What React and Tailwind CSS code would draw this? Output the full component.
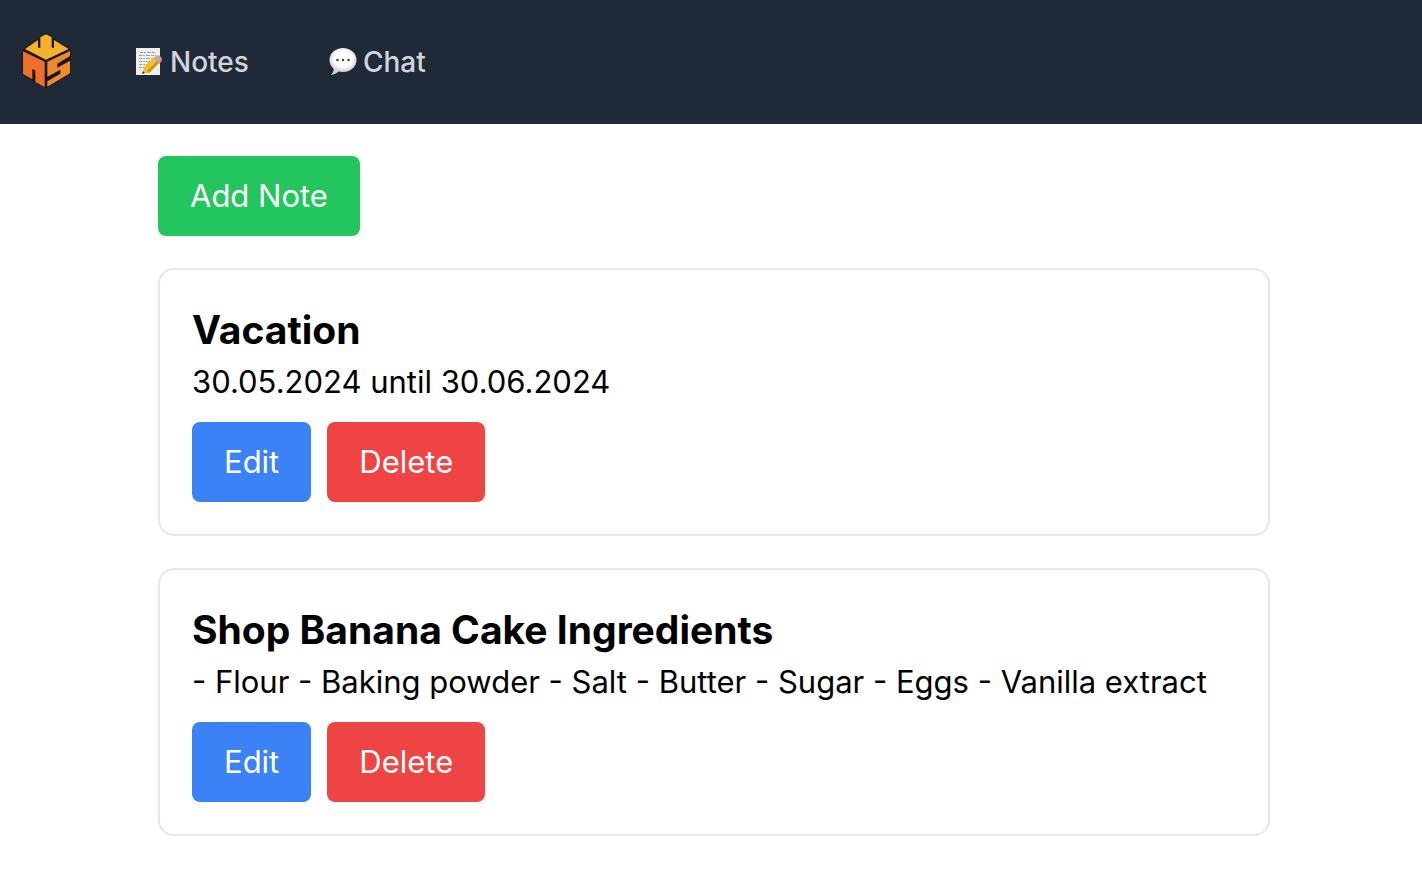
import { useState } from 'react';

const Logo = () => (
    <svg viewBox="48 36 180 180" className="w-15 h-15" aria-hidden="true">
        <circle cx="138" cy="124" r="86" fill="#1b2d42" opacity="0.45" />
        <path d="M138 40 L212 88 V162 L138 205 L66 164 V90 Z" fill="#1c1710" />
        {/* top */}
        <path d="M138 43 L155 52 V83 H162 V60 L206 87 L138 119 L75 87 L114 60 V83 H121 V52 Z" fill="#f3b229" />
        {/* left side */}
        <path d="M69 94 L134 125 V201 L106 186 V152 L97 147 V178 L69 162 Z" fill="#ee6f2b" />
        {/* right side */}
        <path d="M142 125 L210 93 V108 L172 131 V143 L210 122 V160 L142 200 V184 L181 161 V149 L142 170 Z" fill="#ee8a30" />
    </svg>
);

const NoteIcon = () => (
    <svg viewBox="0 0 28 32" className="w-7 h-8" aria-hidden="true">
        <rect x="0" y="2" width="24" height="27" fill="#eeeeec" />
        <g stroke="#9a9da1" strokeWidth="1" strokeDasharray="3 1 2 1 4 1">
            <path d="M4 6.5 H19" />
            <path d="M3 9.5 H20" />
            <path d="M3 12.5 H17" />
            <path d="M3 15.5 H14" />
            <path d="M3 18.5 H11" />
            <path d="M3 21.5 H8" />
        </g>
        <path d="M6 28 L8 21 L13 26 Z" fill="#e9c69a" />
        <path d="M6 28 L7 25 L9 27 Z" fill="#333333" />
        <path d="M8 21 L18 11 L23 17 L13 27 Q7 28 8 21 Z" fill="#f2c11d" />
        <path d="M11 25 L21 15 L23 17 L13 27 Z" fill="#cf9412" />
        <path d="M18 12 L20 10 L25 16 L23 18 Z" fill="#a9adb2" />
        <path d="M20 10 Q23 8 25 11 Q27 14 25 16 Z" fill="#e98c8c" />
    </svg>
);

const ChatIcon = () => (
    <svg viewBox="0 0 28 32" className="w-7 h-8" aria-hidden="true">
        <defs>
            <radialGradient id="bubble" cx="0.5" cy="0.45" r="0.55">
                <stop offset="0.6" stopColor="#ffffff" />
                <stop offset="1" stopColor="#cfcfcf" />
            </radialGradient>
        </defs>
        <path d="M4 19 Q6 25 2 29 Q8 28 11 24 Z" fill="#d5d5d5" />
        <ellipse cx="14" cy="14" rx="13.5" ry="12" fill="url(#bubble)" />
        <circle cx="8.5" cy="14" r="1.3" fill="#444444" />
        <circle cx="14" cy="14" r="1.3" fill="#444444" />
        <circle cx="19.5" cy="14" r="1.3" fill="#444444" />
    </svg>
);

const links = [
    { name: 'Notes', href: '#notes', icon: NoteIcon },
    { name: 'Chat', href: '#chat', icon: ChatIcon },
];

const initialNotes = [
    { id: 1, title: 'Vacation', content: '30.05.2024 until 30.06.2024' },
    {
        id: 2,
        title: 'Shop Banana Cake Ingredients',
        content: '- Flour - Baking powder - Salt - Butter - Sugar - Eggs - Vanilla extract',
    },
];

const NoteCard = ({ note, onEdit, onDelete }) => (
    <article className="rounded-2xl border-2 border-gray-200 p-8">
        <h2 className="text-[39px] leading-14 font-bold">{note.title}</h2>
        <p className="text-[31px] leading-12">{note.content}</p>
        <div className="flex gap-4 mt-4">
            <button onClick={() => onEdit(note.id)} className="bg-[#3b82f6] hover:bg-blue-600 text-white text-[31px] leading-12 px-8 py-4 rounded-lg">
                Edit
            </button>
            <button onClick={() => onDelete(note.id)} className="bg-[#ef4444] hover:bg-red-600 text-white text-[31px] leading-12 px-8 py-4 rounded-lg">
                Delete
            </button>
        </div>
    </article>
);

const App = () => {
    const [notes, setNotes] = useState(initialNotes);

    const handleAdd = () => {
        setNotes(prev => [...prev, { id: Date.now(), title: 'New note', content: '' }]);
    };

    const handleEdit = (id) => {
        const title = window.prompt('Title');
        if (title) setNotes(prev => prev.map(n => (n.id === id ? { ...n, title } : n)));
    };

    const handleDelete = (id) => {
        setNotes(prev => prev.filter(n => n.id !== id));
    };

    return (
        <div className="min-h-screen bg-white text-black font-['Inter',sans-serif]">
            <header className="flex items-center gap-5 bg-[#1f2937] px-4 py-8">
                <a href="#home" aria-label="Home">
                    <Logo />
                </a>
                <nav className="flex">
                    {links.map(({ name, href, icon: Icon }) => (
                        <a key={name} href={href} className="flex items-center gap-1.5 px-10 text-[28px] leading-10 font-medium text-[#d1d5db] hover:text-white">
                            <Icon />
                            {name}
                        </a>
                    ))}
                </nav>
            </header>

            <main className="flex flex-col items-stretch gap-8 pl-[158px] pr-[152px] py-8">
                <button onClick={handleAdd} className="self-start bg-[#22c55e] hover:bg-green-600 text-white text-[31px] leading-12 px-8 py-4 rounded-lg">
                    Add Note
                </button>
                {notes.map(note => (
                    <NoteCard key={note.id} note={note} onEdit={handleEdit} onDelete={handleDelete} />
                ))}
            </main>
        </div>
    );
};

export default App;
